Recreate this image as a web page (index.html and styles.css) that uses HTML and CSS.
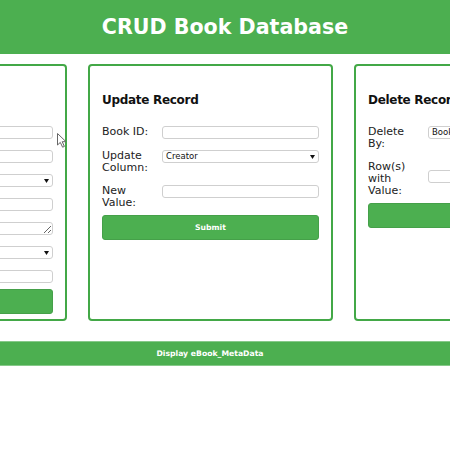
FILE: index.html
```html
<!DOCTYPE html>
<html lang="en">
<head>
<meta charset="utf-8">
<title>CRUD Book Database</title>
<link rel="stylesheet" href="styles.css">
</head>
<body>
<header class="top">
  <h1 class="top__title">CRUD Book Database</h1>
</header>
<main class="wrap">
  <div class="cards">
    <section class="card">
      <h2 class="card__title">Insert Record</h2>
      <form class="form">
        <div class="row"><label class="lbl">ID:</label><input class="field" type="text"></div>
        <div class="row"><label class="lbl">Title:</label><input class="field" type="text"></div>
        <div class="row"><label class="lbl">Type:</label><div class="select"><select class="field field--select"><option></option></select><svg class="caret" width="5" height="4" viewBox="0 0 5 4"><path d="M0 0H5L2.5 4Z"/></svg></div></div>
        <div class="row"><label class="lbl">Creator:</label><input class="field" type="text"></div>
        <div class="row"><label class="lbl">Subject:</label><textarea class="field field--area"></textarea></div>
        <div class="row"><label class="lbl">Lang:</label><div class="select"><select class="field field--select"><option></option></select><svg class="caret" width="5" height="4" viewBox="0 0 5 4"><path d="M0 0H5L2.5 4Z"/></svg></div></div>
        <div class="row"><label class="lbl">Date:</label><input class="field" type="text"></div>
        <button class="submit" type="button">Submit</button>
      </form>
    </section>
    <section class="card">
      <h2 class="card__title">Update Record</h2>
      <form class="form">
        <div class="row"><label class="lbl">Book ID:</label><input class="field" type="text"></div>
        <div class="row"><label class="lbl">Update Column:</label><div class="select"><select class="field field--select"><option>Creator</option></select><svg class="caret" width="5" height="4" viewBox="0 0 5 4"><path d="M0 0H5L2.5 4Z"/></svg></div></div>
        <div class="row"><label class="lbl">New Value:</label><input class="field" type="text"></div>
        <button class="submit" type="button">Submit</button>
      </form>
    </section>
    <section class="card">
      <h2 class="card__title">Delete Record</h2>
      <form class="form">
        <div class="row"><label class="lbl">Delete By:</label><div class="select"><select class="field field--select"><option>Book ID</option></select><svg class="caret" width="5" height="4" viewBox="0 0 5 4"><path d="M0 0H5L2.5 4Z"/></svg></div></div>
        <div class="row"><label class="lbl">Row(s) with Value:</label><input class="field field--low" type="text"></div>
        <button class="submit" type="button">Submit</button>
      </form>
    </section>
  </div>
  <button class="display" type="button">Display eBook_MetaData</button>
</main>
<svg class="cursor" width="11" height="15" viewBox="0 0 11 15"><path d="M0.5 0.5V12L3.3 9.4L5.6 14.2L7.4 13.4L5.2 8.7H9Z" fill="#fff" stroke="#666" stroke-width="1" stroke-linejoin="round"/></svg>
</body>
</html>
```

FILE: styles.css
```css
* { box-sizing: border-box; }

html, body {
  margin: 0;
  padding: 0;
  overflow: hidden;
  background: #fff;
  font-family: "DejaVu Sans", Verdana, sans-serif;
  color: #111;
}

.top {
  background: #4caf50;
  height: 54px;
}

.top__title {
  margin: 0;
  color: #fff;
  font-size: 20.6px;
  font-weight: bold;
  line-height: 54px;
  text-align: center;
}

.wrap {
  width: 776px;
  margin: 10px 0 0 -178px;
  display: flex;
  flex-direction: column;
  gap: 20px;
}

.cards {
  display: flex;
  gap: 21px;
}

.card {
  flex: 0 0 245px;
  height: 257px;
  border: 2px solid #43a847;
  border-radius: 4px;
  padding: 12px;
}

.card__title {
  margin: 14px 0 17px;
  font-size: 12px;
  letter-spacing: -0.3px;
  line-height: 17px;
  font-weight: bold;
  white-space: nowrap;
}

.form {
  display: flex;
  flex-direction: column;
  gap: 11px;
}

.row {
  display: grid;
  grid-template-columns: 52px 1fr;
  column-gap: 8px;
  align-items: start;
}

.lbl {
  font-size: 11px;
  line-height: 12px;
  color: #222;
}

.field {
  display: block;
  width: 100%;
  height: 13px;
  margin: 0;
  padding: 0 3px;
  border: 1px solid #cfcfcf;
  border-radius: 3px;
  background: #fff;
  font-family: "DejaVu Sans", Verdana, sans-serif;
  font-size: 8.5px;
  color: #111;
  outline: none;
}

.field--low { margin-top: 9px; }

.field--area {
  resize: vertical;
  line-height: 11px;
}

.select { position: relative; }

.field--select {
  appearance: none;
  -webkit-appearance: none;
  line-height: 11px;
}

.caret {
  position: absolute;
  right: 4px;
  top: 5px;
  fill: #111;
}

.submit {
  margin-top: -5px;
  height: 25px;
  border: 1px solid #45a049;
  border-radius: 3px;
  background: #4caf50;
  color: #fff;
  font-family: "DejaVu Sans", Verdana, sans-serif;
  font-size: 7.7px;
  font-weight: bold;
}

.display {
  height: 25px;
  border: 0;
  border-top: 1px solid #86c989;
  border-bottom: 1px solid #86c989;
  background: #4caf50;
  color: #fff;
  font-family: "DejaVu Sans", Verdana, sans-serif;
  font-size: 7.7px;
  font-weight: bold;
}

.cursor {
  position: absolute;
  left: 57px;
  top: 133px;
}
```
